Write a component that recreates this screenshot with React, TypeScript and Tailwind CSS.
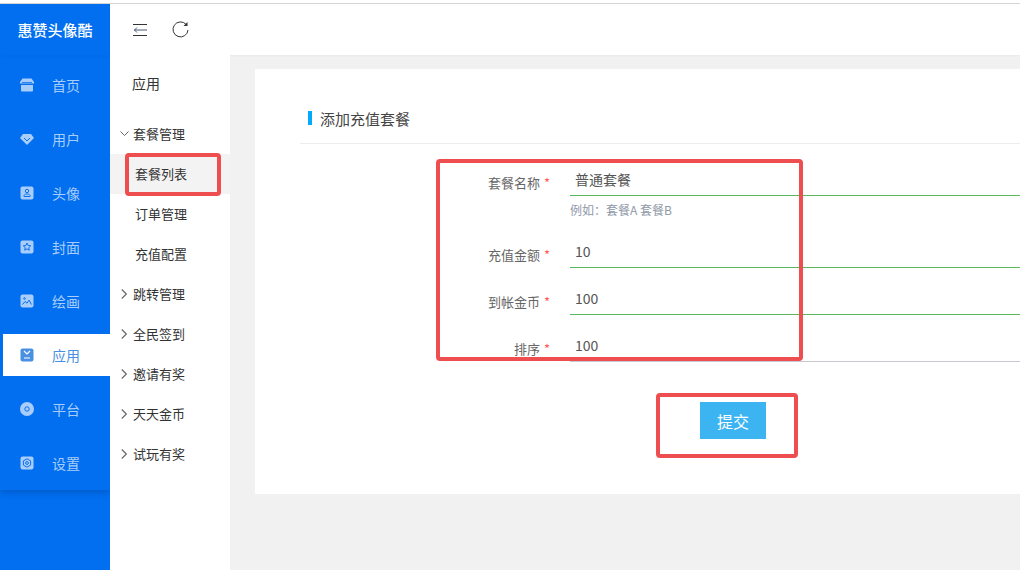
const FONT = 'font-["Noto_Sans_CJK_SC","Liberation_Sans",sans-serif]';

function IconShape({ name, active }: { name: string; active: boolean }) {
  const fill = active ? '#4a90e2' : '#a9cdfa';
  const cut = active ? '#ffffff' : '#0a6fee';
  if (name === 'shop') {
    return (
      <svg width="14" height="14" viewBox="0 0 14 14">
        <path d="M2.500 0.500h9L14 4v1.500H0V4z" fill={fill} />
        <path d="M1 7h12v5.500a1 1 0 0 1-1 1H2a1 1 0 0 1-1-1z" fill={fill} />
        <path d="M2 4.500h10" stroke={cut} strokeWidth="0.800" />
      </svg>
    );
  }
  if (name === 'diamond') {
    return (
      <svg width="14" height="14" viewBox="0 0 14 14">
        <path d="M3 2h8l3 4-7 7-7-7z" fill={fill} />
        <path d="M4 6l3 3 3-3" stroke={cut} strokeWidth="1" fill="none" />
      </svg>
    );
  }
  if (name === 'circle') {
    return (
      <svg width="14" height="14" viewBox="0 0 14 14">
        <circle cx="7" cy="7" r="7" fill={fill} />
        <circle cx="7" cy="7" r="2.200" fill="none" stroke={cut} strokeWidth="1" />
      </svg>
    );
  }
  return (
    <svg width="14" height="14" viewBox="0 0 14 14">
      <rect width="13" height="13" x="0.500" y="0.500" rx="2" fill={fill} />
      {name === 'user' && (
        <g fill="none" stroke={cut} strokeWidth="1">
          <circle cx="7" cy="5" r="1.700" />
          <path d="M4 10.500h6V9.500L8.500 8h-3L4 9.500z" />
        </g>
      )}
      {name === 'star' && <path d="M7 3l1.100 2.500 2.600.3-1.900 1.800.5 2.600L7 8.900l-2.300 1.300.5-2.600-1.900-1.800 2.600-.3z" fill="none" stroke={cut} strokeWidth="1" />}
      {name === 'image' && (
        <g fill="none" stroke={cut} strokeWidth="1">
          <path d="M2.500 10.500l2.500-3 2 1.700 2-3 2.500 4.300" />
          <circle cx="4.500" cy="4.500" r="0.800" />
        </g>
      )}
      {name === 'app' && <path d="M4 3l3 3 3-3M4 10h6" fill="none" stroke={cut} strokeWidth="1.200" />}
      {name === 'gear' && (
        <g fill="none" stroke={cut} strokeWidth="1">
          <path d="M7 2.800l3.600 2.100v4.200L7 11.200 3.400 9.100V4.900z" />
          <circle cx="7" cy="7" r="1.400" />
        </g>
      )}
    </svg>
  );
}

const navItems = [
  { label: '首页', icon: 'shop' },
  { label: '用户', icon: 'diamond' },
  { label: '头像', icon: 'user' },
  { label: '封面', icon: 'star' },
  { label: '绘画', icon: 'image' },
  { label: '应用', icon: 'app', active: true },
  { label: '平台', icon: 'circle' },
  { label: '设置', icon: 'gear' },
];

const groupsAfter = ['跳转管理', '全民签到', '邀请有奖', '天天金币', '试玩有奖'];

const fields = [
  { label: '套餐名称', value: '普通套餐', hint: '例如\uFF1A套餐A 套餐B', line: 'border-[#5cb85c]' },
  { label: '充值金额', value: '10', line: 'border-[#5cb85c]' },
  { label: '到帐金币', value: '100', line: 'border-[#5cb85c]' },
  { label: '排序', value: '100', line: 'border-[#c8c8d0]' },
];

export default function App() {
  return (
    <div className={`${FONT} relative h-[570px] w-[1020px] overflow-hidden bg-[#f1f1f1] flex flex-col`}>
      <div className="h-1 bg-white border-b border-[#d4d4d4] shrink-0" />
      <div className="flex flex-1 min-h-0">
        {/* primary nav */}
        <aside className="w-[110px] shrink-0 bg-[#016ff0] flex flex-col">
          <div className="h-[54px] pb-[2px] flex items-center justify-center text-[15px] font-medium text-white">
            惠赞头像酷
          </div>
          <nav className="h-[432px] shadow-[0_3px_6px_rgba(0,60,140,0.35)]">
            {navItems.map((item) => (
              <div key={item.label} className="h-[54px] flex items-center">
                <div className={`ml-[3px] h-[42px] flex-1 flex items-center pl-[17px] gap-[18px] text-sm ${item.active ? 'bg-white text-[#4a90e2]' : 'text-[#a9cdfa]'}`}>
                  <IconShape name={item.icon} active={!!item.active} />
                  <span className="pb-[1px]">{item.label}</span>
                </div>
              </div>
            ))}
          </nav>
        </aside>

        <div className="flex-1 min-w-0 flex flex-col">
          <header className="h-[51px] shrink-0 bg-white flex items-center pl-[23px] gap-[24px] shadow-[0_1px_2px_rgba(0,0,0,0.04)]">
            <svg width="15" height="12" viewBox="0 0 15 12" fill="none" stroke="#333" strokeWidth="1">
              <path d="M0 0.500h14M0 11.500h14" />
              <path d="M1 6h13M4 3.500L1.500 6 4 8.500" stroke="#4a5a78" />
            </svg>
            <svg width="17" height="17" viewBox="0 0 17 17" fill="none" stroke="#333" strokeWidth="1">
              <path d="M14.200 3.500A7.500 7.500 0 1 0 16 9" />
              <path d="M15.500 1v4h-4z" fill="#333" stroke="none" />
            </svg>
          </header>

          <div className="flex flex-1 min-h-0">
            {/* secondary nav */}
            <aside className="w-[120px] shrink-0 bg-white flex flex-col text-[13px] text-[#333]">
              <div className="h-[59px] pl-[22px] pt-[18px] text-sm leading-[20px]">应用</div>
              <div className="h-10 pb-[1px] flex items-center pl-[10px] gap-[4px]">
                <svg width="9" height="6" viewBox="0 0 9 6" fill="none" stroke="#666" strokeWidth="1">
                  <path d="M0.500 0.500l4 4 4-4" />
                </svg>
                <span>套餐管理</span>
              </div>
              <div className="h-10 pb-[1px] flex items-center pl-[25px] bg-[#f3f3f3]">套餐列表</div>
              <div className="h-10 pb-[1px] flex items-center pl-[25px]">订单管理</div>
              <div className="h-10 pb-[1px] flex items-center pl-[25px]">充值配置</div>
              {groupsAfter.map((g) => (
                <div key={g} className="h-10 pb-[1px] flex items-center pl-[11px] gap-[6px]">
                  <svg width="6" height="10" viewBox="0 0 6 10" fill="none" stroke="#6b6b6b" strokeWidth="1.200">
                    <path d="M0.800 0.500l4.500 4.500-4.500 4.500" />
                  </svg>
                  <span>{g}</span>
                </div>
              ))}
            </aside>

            {/* main */}
            <main className="flex-1 min-w-0 pl-[25px] pt-[14px]">
              <section className="h-[425px] bg-white pl-[45px] pt-[35px]">
                <div className="flex items-center h-[28px] pl-[8px] gap-2 text-[15px] leading-none text-[#444]">
                  <span className="w-1 h-[14px] bg-[#00aaff]" />
                  <span>添加充值套餐</span>
                </div>
                <div className="mt-[11px] border-t border-[#eeeeee]" />
                <form className="mt-5 flex flex-col">
                  {fields.map((f) => (
                    <div key={f.label} className="flex">
                      <div className="w-[270px] shrink-0 pr-[20px] pt-[9px] text-right text-[13px] leading-[20px] text-[#666]">
                        {f.label} <span className="ml-[1px] text-[#ff5a5a]">*</span>
                      </div>
                      <div className="flex-1 min-w-0 mb-[15px]">
                        <div className={`h-8 pl-[5px] border-b ${f.line} text-sm leading-[30px] text-[#555]`}>{f.value}</div>
                        {f.hint && <div className="pt-[5px] h-[25px] text-xs leading-[17px] text-[#8f99a8]">{f.hint}</div>}
                      </div>
                    </div>
                  ))}
                  <button type="button" className="ml-[400px] mt-[25px] w-[66px] h-[37px] bg-[#3cb4f2] text-base text-white">
                    提交
                  </button>
                </form>
              </section>
            </main>
          </div>
        </div>
      </div>

      {/* red annotation boxes */}
      <div className="absolute left-[125px] top-[153px] w-[96px] h-[43px] border-4 border-[#ef4e50] rounded-sm" />
      <div className="absolute left-[436px] top-[159px] w-[367px] h-[202px] border-4 border-[#ef4e50] rounded-sm" />
      <div className="absolute left-[656px] top-[393px] w-[142px] h-[65px] border-4 border-[#ef4e50] rounded-sm" />
    </div>
  );
}
